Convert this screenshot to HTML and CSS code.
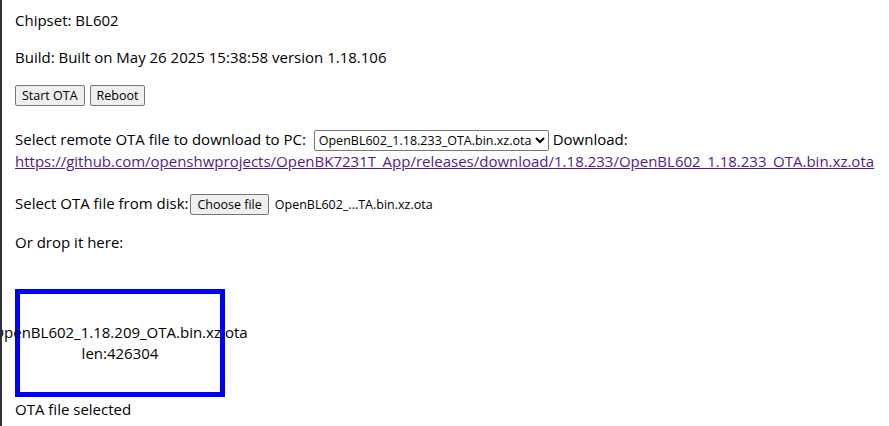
FILE: index.html
```html
<!DOCTYPE html>
<html lang="en">
<head>
    <meta charset="UTF-8">
    <meta name="viewport" content="width=device-width, initial-scale=1.0">
    <title>OTA</title>
    <link rel="stylesheet" href="styles.css">
</head>
<body>
    <div class="frame">
        <div class="page">
            <p>Chipset: BL602</p>
            <p>Build: Built on May 26 2025 15:38:58 version 1.18.106</p>
            <p class="actions">
                <button class="btn">Start OTA</button>
                <button class="btn">Reboot</button>
            </p>
            <p class="remote-row">
                Select remote OTA file to download to PC:
                <select class="ota-select">
                    <option>OpenBL602_1.18.233_OTA.bin.xz.ota</option>
                </select>
                Download:
                <a class="ota-link" href="#">https://github.com/openshwprojects/OpenBK7231T_App/releases/download/1.18.233/OpenBL602_1.18.233_OTA.bin.xz.ota</a>
            </p>
            <p class="file-row">
                Select OTA file from disk:<span class="file-input"><button class="btn">Choose file</button><span class="file-name">OpenBL602_...TA.bin.xz.ota</span></span>
            </p>
            <p>Or drop it here:</p>
            <div class="drop-zone">
                <div>OpenBL602_1.18.209_OTA.bin.xz.ota</div>
                <div>len:426304</div>
            </div>
            <div class="status">OTA file selected</div>
        </div>
    </div>
</body>
</html>
```

FILE: styles.css
```css
body {
    margin: 0;
    background-color: #fff;
    font-family: 'Open Sans', sans-serif;
    font-size: 15px;
    line-height: 21px;
    color: #000;
}

.frame {
    border-left: 2px solid #2f2f2f;
    min-height: 426px;
    box-sizing: border-box;
    overflow: hidden;
}

.page {
    padding: 10px 13px 0 13px;
}

.page p {
    margin: 0 0 16px 0;
}

.page .actions {
    margin-bottom: 23px;
}

.page .remote-row {
    margin-bottom: 21px;
}

.page .file-row {
    margin-bottom: 17px;
}

.btn {
    font-family: 'Open Sans', sans-serif;
    font-size: 12.5px;
    line-height: 15px;
    color: #000;
    background-color: #efefef;
    border: 1px solid #767676;
    border-radius: 2px;
    padding: 2px 6px;
    margin: 0;
}

.actions .btn + .btn {
    margin-left: 1px;
}

.ota-select {
    font-family: 'Open Sans', sans-serif;
    font-size: 12.5px;
    height: 21px;
    margin-left: 4px;
    border: 1px solid #767676;
    border-radius: 2px;
    background-color: #fff;
    color: #000;
}

.ota-link {
    color: #551a8b;
}

.file-input .btn {
    margin-left: 2px;
}

.file-name {
    font-size: 12.5px;
    margin-left: 6px;
}

.drop-zone {
    margin-top: 36px;
    width: 200px;
    height: 98px;
    border: 5px solid #0000ff;
    display: flex;
    flex-direction: column;
    justify-content: center;
    align-items: center;
    white-space: nowrap;
}

.status {
    margin-top: 2px;
}
```
